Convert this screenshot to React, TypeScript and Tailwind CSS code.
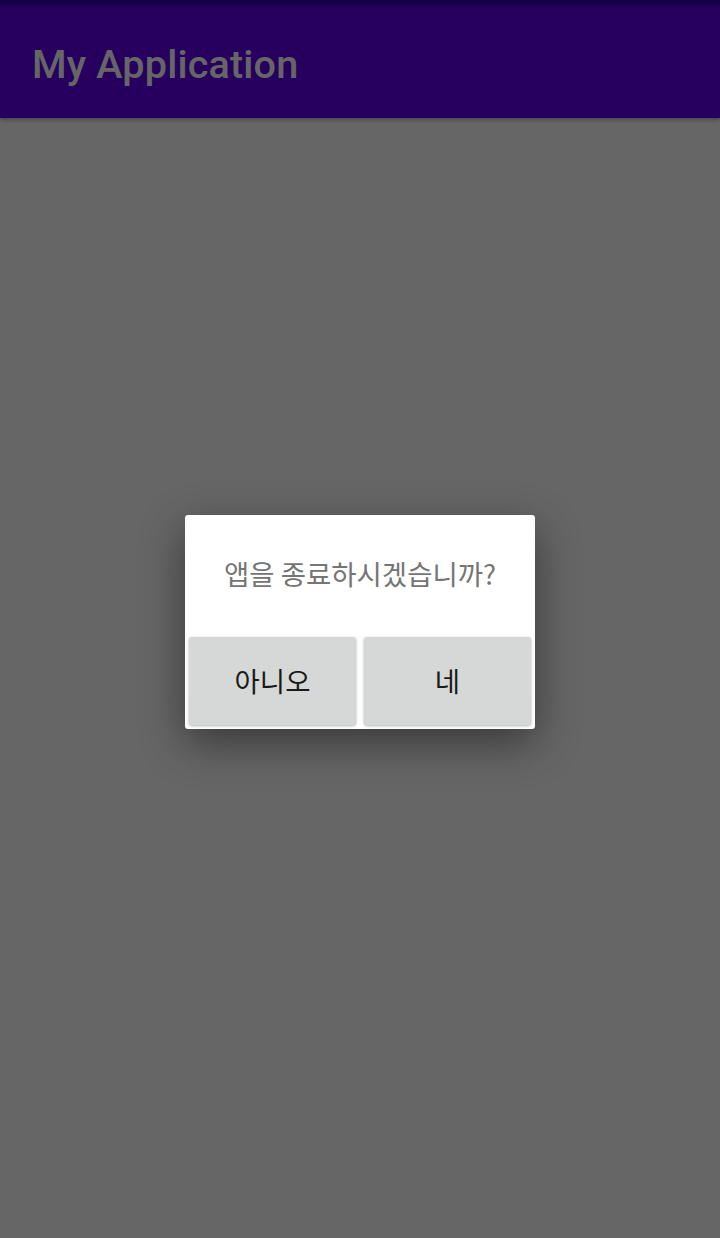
import React from "react";

export default function App() {
  return (
    <div className="relative w-[720px] h-[1238px] bg-white overflow-hidden" style={{ fontFamily: "Roboto, 'Noto Sans CJK KR', sans-serif" }}>
      <div className="h-[6px] bg-[#3700B3]" />
      <div className="h-[112px] bg-[#6200EE] flex items-center pl-[32px] pt-[6px] shadow-[0_2px_4px_rgba(0,0,0,0.3)] relative z-10">
        <span className="text-white text-[39.5px] font-medium leading-none tracking-[0.005em]" style={{ fontFamily: "Roboto, sans-serif" }}>
          My Application
        </span>
      </div>
      <div className="absolute inset-0 z-20 bg-black/60 flex items-center justify-center pt-[6px]">
        <div className="w-[350px] h-[214px] bg-white rounded-[3px] shadow-[0_14px_44px_rgba(0,0,0,0.45)] flex flex-col">
          <div className="flex-1 flex items-center justify-center pb-[4px]">
            <span className="text-[#757575] text-[27.5px] leading-none" style={{ fontFamily: "'Noto Sans CJK KR', sans-serif" }}>
              앱을 종료하시겠습니까?
            </span>
          </div>
          <div className="flex gap-[8px] px-[4px] pb-[4px]">
            <button className="flex-1 h-[88px] bg-[#d6d7d7] rounded-[3px] shadow-[0_1px_3px_rgba(0,0,0,0.3)] text-[#1a1a1a] text-[27.5px] leading-none" style={{ fontFamily: "'Noto Sans CJK KR', sans-serif" }}>
              아니오
            </button>
            <button className="flex-1 h-[88px] bg-[#d6d7d7] rounded-[3px] shadow-[0_1px_3px_rgba(0,0,0,0.3)] text-[#1a1a1a] text-[27.5px] leading-none" style={{ fontFamily: "'Noto Sans CJK KR', sans-serif" }}>
              네
            </button>
          </div>
        </div>
      </div>
    </div>
  );
}
